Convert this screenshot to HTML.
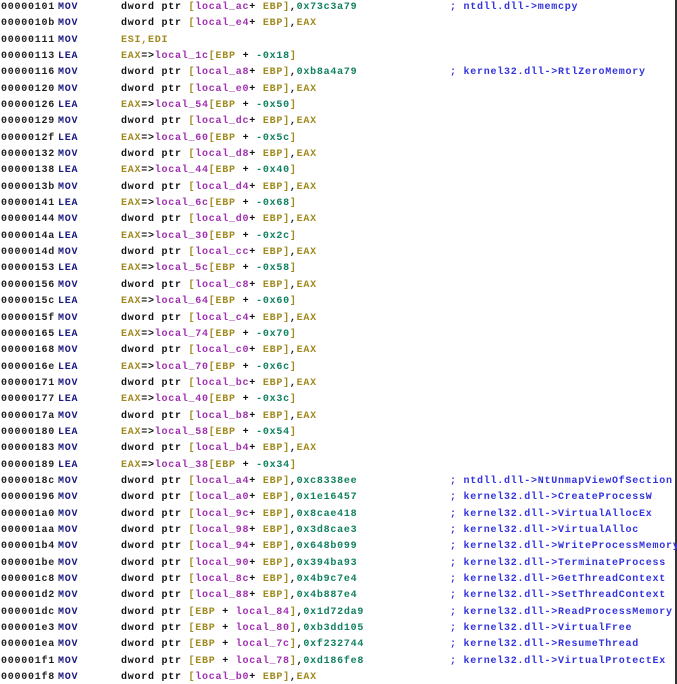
<!DOCTYPE html>
<html><head><meta charset="utf-8"><style>
html,body{margin:0;padding:0;background:#fff;width:677px;height:684px;overflow:hidden}
body{position:relative;font-family:"Liberation Mono",monospace;font-size:10px;font-weight:bold;letter-spacing:0.75px}
.r{position:absolute;left:0;height:16px;line-height:16px;white-space:pre}
.a{position:absolute;left:1px;color:#222}
.m{position:absolute;left:58px;color:#1a1a80}
.o{position:absolute;left:121px;color:#111}
.c{position:absolute;left:450px;color:#3333dd}
.l{color:#a030b0}.e{color:#a08a20}.h{color:#108060}
#bar{position:absolute;left:675px;top:0;width:2px;height:684px;background:#333}
</style></head><body>
<div id="bar"></div>
<div id="rows"></div>
<script>
const D=[
["00000101","MOV","d","local_ac","0x73c3a79","ntdll.dll->memcpy"],
["0000010b","MOV","d","local_e4","EAX"],
["00000111","MOV","x"],
["00000113","LEA","l","local_1c","-0x18"],
["00000116","MOV","d","local_a8","0xb8a4a79","kernel32.dll->RtlZeroMemory"],
["00000120","MOV","d","local_e0","EAX"],
["00000126","LEA","l","local_54","-0x50"],
["00000129","MOV","d","local_dc","EAX"],
["0000012f","LEA","l","local_60","-0x5c"],
["00000132","MOV","d","local_d8","EAX"],
["00000138","LEA","l","local_44","-0x40"],
["0000013b","MOV","d","local_d4","EAX"],
["00000141","LEA","l","local_6c","-0x68"],
["00000144","MOV","d","local_d0","EAX"],
["0000014a","LEA","l","local_30","-0x2c"],
["0000014d","MOV","d","local_cc","EAX"],
["00000153","LEA","l","local_5c","-0x58"],
["00000156","MOV","d","local_c8","EAX"],
["0000015c","LEA","l","local_64","-0x60"],
["0000015f","MOV","d","local_c4","EAX"],
["00000165","LEA","l","local_74","-0x70"],
["00000168","MOV","d","local_c0","EAX"],
["0000016e","LEA","l","local_70","-0x6c"],
["00000171","MOV","d","local_bc","EAX"],
["00000177","LEA","l","local_40","-0x3c"],
["0000017a","MOV","d","local_b8","EAX"],
["00000180","LEA","l","local_58","-0x54"],
["00000183","MOV","d","local_b4","EAX"],
["00000189","LEA","l","local_38","-0x34"],
["0000018c","MOV","d","local_a4","0xc8338ee","ntdll.dll->NtUnmapViewOfSection"],
["00000196","MOV","d","local_a0","0x1e16457","kernel32.dll->CreateProcessW"],
["000001a0","MOV","d","local_9c","0x8cae418","kernel32.dll->VirtualAllocEx"],
["000001aa","MOV","d","local_98","0x3d8cae3","kernel32.dll->VirtualAlloc"],
["000001b4","MOV","d","local_94","0x648b099","kernel32.dll->WriteProcessMemory"],
["000001be","MOV","d","local_90","0x394ba93","kernel32.dll->TerminateProcess"],
["000001c8","MOV","d","local_8c","0x4b9c7e4","kernel32.dll->GetThreadContext"],
["000001d2","MOV","d","local_88","0x4b887e4","kernel32.dll->SetThreadContext"],
["000001dc","MOV","r","local_84","0x1d72da9","kernel32.dll->ReadProcessMemory"],
["000001e3","MOV","r","local_80","0xb3dd105","kernel32.dll->VirtualFree"],
["000001ea","MOV","r","local_7c","0xf232744","kernel32.dll->ResumeThread"],
["000001f1","MOV","r","local_78","0xd186fe8","kernel32.dll->VirtualProtectEx"],
["000001f8","MOV","d","local_b0","EAX"]];
let h="";
D.forEach((r,i)=>{
 const top=(i*16.34).toFixed(1);
 let op="";
 const v=r[4]=="EAX"?'<span class="e">EAX</span>':'<span class="h">'+r[4]+'</span>';
 if(r[2]=="d") op='dword ptr <span class="e">[</span><span class="l">'+r[3]+'</span>+ <span class="e">EBP]</span>,'+v;
 else if(r[2]=="r") op='dword ptr <span class="e">[EBP</span> + <span class="l">'+r[3]+'</span><span class="e">]</span>,'+v;
 else if(r[2]=="l") op='<span class="e">EAX</span>=&gt;<span class="l">'+r[3]+'</span><span class="e">[EBP</span> + <span class="h">'+r[4]+'</span><span class="e">]</span>';
 else op='<span class="e">ESI,EDI</span>';
 h+='<div class="r" style="top:'+top+'px"><span class="a">'+r[0]+'</span><span class="m">'+r[1]+'</span><span class="o">'+op+'</span>'+(r[5]?'<span class="c">; '+r[5]+'</span>':'')+'</div>';
});
document.getElementById("rows").innerHTML=h;
</script>
</body></html>
